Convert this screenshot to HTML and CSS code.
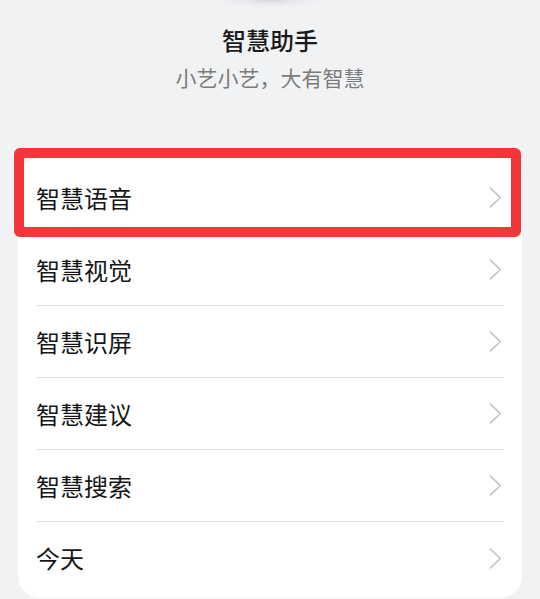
FILE: index.html
```html
<!DOCTYPE html>
<html lang="zh-CN">
<head>
<meta charset="utf-8">
<title>智慧助手</title>
<link rel="stylesheet" href="styles.css">
</head>
<body>
<div class="page">
  <header class="header">
    <div class="logo-shadow"></div>
    <h1 class="title">智慧助手</h1>
    <p class="subtitle">小艺小艺，大有智慧</p>
  </header>
  <ul class="card">
    <li class="row row-highlight">
      <span class="row-label">智慧语音</span>
      <svg class="chevron" viewBox="0 0 13 21"><path d="M1.5 1.2 L11.3 10.5 L1.5 19.8"/></svg>
      <span class="highlight-box"></span>
    </li>
    <li class="row">
      <span class="row-label">智慧视觉</span>
      <svg class="chevron" viewBox="0 0 13 21"><path d="M1.5 1.2 L11.3 10.5 L1.5 19.8"/></svg>
    </li>
    <li class="row">
      <span class="row-label">智慧识屏</span>
      <svg class="chevron" viewBox="0 0 13 21"><path d="M1.5 1.2 L11.3 10.5 L1.5 19.8"/></svg>
    </li>
    <li class="row">
      <span class="row-label">智慧建议</span>
      <svg class="chevron" viewBox="0 0 13 21"><path d="M1.5 1.2 L11.3 10.5 L1.5 19.8"/></svg>
    </li>
    <li class="row">
      <span class="row-label">智慧搜索</span>
      <svg class="chevron" viewBox="0 0 13 21"><path d="M1.5 1.2 L11.3 10.5 L1.5 19.8"/></svg>
    </li>
    <li class="row">
      <span class="row-label">今天</span>
      <svg class="chevron" viewBox="0 0 13 21"><path d="M1.5 1.2 L11.3 10.5 L1.5 19.8"/></svg>
    </li>
  </ul>
</div>
</body>
</html>
```

FILE: styles.css
```css
html, body {
  margin: 0;
  padding: 0;
  background: #f1f2f4;
}

body {
  font-family: "Noto Sans CJK SC", "Noto Sans", sans-serif;
  color: #1b1b1b;
  height: 599px;
  overflow: hidden;
}

.page {
  display: flex;
  flex-direction: column;
}

.header {
  display: flex;
  flex-direction: column;
  align-items: center;
}

.logo-shadow {
  width: 110px;
  height: 8px;
  margin-bottom: 16px;
  background: radial-gradient(ellipse 50% 100% at 50% 0%, rgba(200, 202, 206, 0.75) 0%, rgba(220, 222, 226, 0.45) 45%, rgba(241, 242, 244, 0) 100%);
}

.title {
  margin: 0;
  font-size: 24px;
  line-height: 32px;
  font-weight: 500;
  color: #1a1a1a;
}

.subtitle {
  margin: 7px 0 0;
  font-size: 21px;
  line-height: 28px;
  font-weight: 400;
  color: #7b7b7b;
}

.card {
  list-style: none;
  margin: 67px 18px 0;
  padding: 4px 18px;
  background: #ffffff;
  border-radius: 22px;
}

.row {
  position: relative;
  display: flex;
  align-items: center;
  justify-content: space-between;
  height: 72px;
  border-bottom: 1px solid #e2e2e4;
  box-sizing: border-box;
}

.row:last-child {
  border-bottom: none;
}

.row-highlight {
  border-bottom-color: transparent;
}

.row-label {
  font-size: 24px;
  line-height: 32px;
  font-weight: 400;
  color: #161616;
}

.chevron {
  width: 13px;
  height: 21px;
  margin-right: 2px;
  fill: none;
  stroke: #c4c4c6;
  stroke-width: 1.7;
  stroke-linecap: round;
  stroke-linejoin: round;
}

.highlight-box {
  position: absolute;
  left: -22px;
  right: -17px;
  top: -14px;
  bottom: -4px;
  border: 10px solid #f2363a;
  border-radius: 6px;
  pointer-events: none;
}
```
